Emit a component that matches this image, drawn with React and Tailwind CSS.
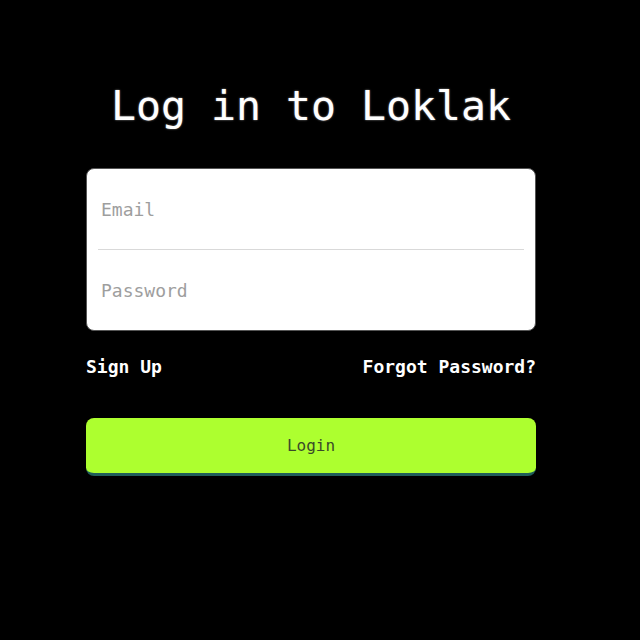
import React from "react";

const mono = { fontFamily: '"DejaVu Sans Mono", "Liberation Mono", monospace' };

const App = () => {
  return (
    <div className="min-h-[640px] w-full bg-black flex flex-col items-center pr-[18px]" style={mono}>
      {/* Title */}
      <h1 className="mt-[80px] text-[41.5px] leading-[52px] text-white [text-shadow:0_0_2px_rgba(255,255,255,0.6)]">
        Log in to Loklak
      </h1>

      {/* Form card */}
      <div className="mt-[36px] w-[450px] bg-white rounded-lg border border-[#555] overflow-hidden">
        <div className="h-[81px] mx-[11px] border-b border-[#d9d9d9] flex items-center">
          <input
            className="w-full px-[3px] text-[18px] outline-none placeholder-[#9e9e9e] bg-transparent"
            style={mono}
            placeholder="Email"
          />
        </div>
        <div className="h-[80px] mx-[11px] flex items-center">
          <input
            type="password"
            className="w-full px-[3px] text-[18px] outline-none placeholder-[#9e9e9e] bg-transparent"
            style={mono}
            placeholder="Password"
          />
        </div>
      </div>

      {/* Links */}
      <div className="mt-[22px] w-[450px] flex justify-between text-[18px] font-bold text-white leading-[28px]">
        <a href="#signup">Sign Up</a>
        <a href="#forgot">Forgot Password?</a>
      </div>

      {/* Login button */}
      <button
        className="mt-[37px] w-[450px] h-[58px] rounded-lg bg-[#adff2f] border-b-[3px] border-[#1f5e5a] text-[16px] text-[#3a4a2a]"
        style={mono}
      >
        Login
      </button>
    </div>
  );
};

export default App;
